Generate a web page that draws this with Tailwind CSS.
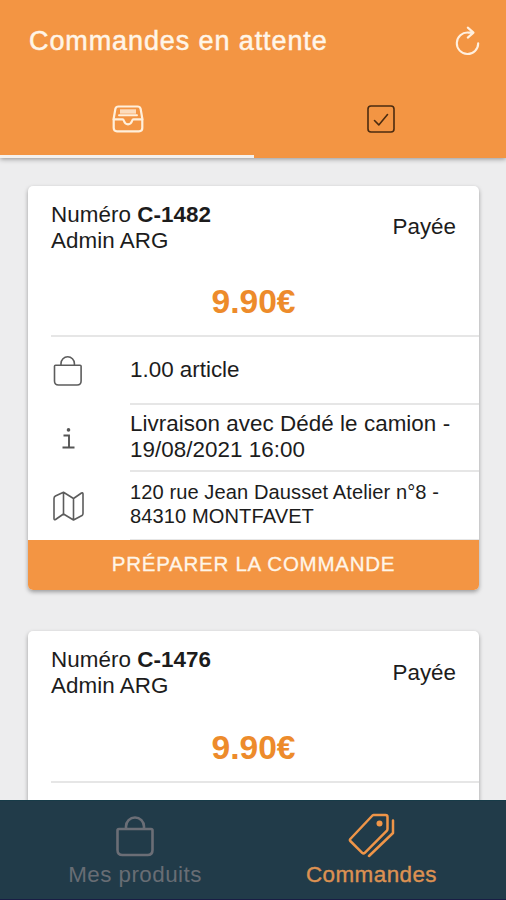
<!DOCTYPE html>
<html lang="fr">
<head>
<meta charset="utf-8">
<title>Commandes en attente</title>
<script src="https://cdn.jsdelivr.net/npm/@tailwindcss/browser@4"></script>
</head>
<body class="h-[900px] overflow-hidden bg-[#ededee] text-[22.4px] leading-[26px] text-[#1c1c1c] font-['Liberation_Sans',Arial,sans-serif]">
<div class="flex h-[900px] flex-col">
  <header class="z-10 flex h-[158px] shrink-0 flex-col bg-[#f39543] shadow-[0_1px_5px_rgba(0,0,0,0.4)]">
    <div class="flex h-[81px] items-center justify-between pl-[29px] pr-[25px]">
      <h1 class="text-[27px] leading-8 tracking-[0.9px] text-[#fff5e8] [-webkit-text-stroke:0.5px_#fff5e8]">Commandes en attente</h1>
      <svg class="h-[32px] w-[28px]" viewBox="0 0 28 32" fill="none" stroke="#fff0e0" stroke-width="2.1" stroke-linecap="round" stroke-linejoin="round"><path d="M20 7.600H15.200A10.700 10.700 0 1 0 25.200 18.200M14.800 2.600l5.700 5-5.700 5"/></svg>
    </div>
    <nav class="grid h-[77px] grid-cols-[254px_1fr]">
      <div class="flex items-center justify-center border-b-3 border-[#f4f1ee] pt-[2px] pl-[2px]">
        <svg class="h-[28px] w-[32px]" viewBox="0 0 32 28" fill="none" stroke="#fff0dc" stroke-width="2.200" stroke-linejoin="round" stroke-linecap="round"><path d="M6.500 1.500h19Q28 1.500 28.600 3.700L30.300 13.500V23Q30.300 26.300 27 26.300H5Q1.700 26.300 1.700 23V13.500L3.400 3.700Q4 1.500 6.500 1.500Z"/><path d="M1.700 14.400H10.500Q11.500 14.400 12 16Q13 19.300 16 19.300Q19 19.300 20 16Q20.500 14.400 21.500 14.400H30.300"/><path d="M7 10.300H25" stroke-width="1.900"/><path d="M8 6.500H24" stroke="#fcdcbc" stroke-width="4.400" stroke-linecap="butt"/></svg>
      </div>
      <div class="flex items-center justify-center pb-px pl-[2px]">
        <svg class="h-[28px] w-[28px]" viewBox="0 0 28 28" fill="none" stroke="#4b2b10" stroke-width="1.600" stroke-linecap="round" stroke-linejoin="round"><rect x="1" y="1" width="26" height="26" rx="3"/><path d="M7.500 15.500l4.300 4.400L20.500 9.500"/></svg>
      </div>
    </nav>
  </header>

  <main class="flex min-h-0 grow flex-col gap-[41px] overflow-hidden px-[28px] pt-[28px]">
    <article class="flex h-[404px] w-[451px] shrink-0 flex-col overflow-hidden rounded-[5px] bg-white shadow-[0_2px_4px_rgba(0,0,0,0.35)]">
      <div class="flex h-[82px] items-center justify-between pl-[23px] pr-[23px]">
        <p class="pt-[2px] tracking-[0.05px]">Numéro <b>C-1482</b><br>Admin ARG</p>
        <p>Payée</p>
      </div>
      <div class="ml-[23px] flex h-[69px] items-center justify-center border-b-2 border-[#e6e6e6] pr-[23px] text-[33.6px] font-bold text-[#ed8b2b]">9.90€</div>
      <div class="grid grid-cols-[102px_1fr]">
        <div class="flex items-center pl-[25px]"><svg class="h-[30px] w-[30px]" viewBox="0 0 30 30" fill="none" stroke="#5c5c5c" stroke-width="1.600"><path d="M2.500 9.300h24.600q1 0 1 1V25q0 4-4 4H5.500q-4 0-4-4V10.300q0-1 1-1ZM8 9.300V7.500a6.700 6.700 0 0 1 13.400 0v1.800"/></svg></div>
        <div class="flex h-[68px] items-center border-b-2 border-[#e6e6e6]">1.00 article</div>
        <div class="flex items-center pl-[34px]"><svg class="h-[21px] w-[13px]" viewBox="0 0 13 21" fill="none" stroke="#555" stroke-width="1.900"><path d="M1.500 7.500H7V19.500M.5 19.500H12.500"/><circle cx="6.500" cy="1.900" r="1.800" fill="#555" stroke="none"/></svg></div>
        <div class="flex h-[67px] items-center border-b-2 border-[#e6e6e6] pb-px tracking-[0.05px]">Livraison avec Dédé le camion -<br>19/08/2021 16:00</div>
        <div class="flex items-center pl-[25px]"><svg class="h-[30px] w-[31px]" viewBox="0 0 31 30" fill="none" stroke="#5c5c5c" stroke-width="1.600" stroke-linejoin="round"><path d="M1 7.500Q1 5.800 2.400 5L10.500 1.300L20.500 7.500L28.500 2Q30 1.200 30 3V22.500Q30 23.800 29 24.500L20.500 29L10.500 23L2.500 28.500Q1 29.200 1 27.500ZM10.500 1.300V23M20.500 7.500V29"/></svg></div>
        <div class="flex h-[68px] items-center border-b border-[#e6e6e6] pb-[3px] text-[20.1px] leading-[24px] tracking-[0.08px]">120 rue Jean Dausset Atelier n°8 -<br>84310 MONTFAVET</div>
      </div>
      <div class="flex grow items-center justify-center bg-[#f39543] pb-[2px] text-[20.5px] tracking-[0.75px] text-[#fff5e8] [-webkit-text-stroke:0.3px_#fff5e8]">PRÉPARER LA COMMANDE</div>
    </article>

    <article class="flex h-[404px] w-[451px] shrink-0 flex-col rounded-[5px] bg-white shadow-[0_2px_4px_rgba(0,0,0,0.35)]">
      <div class="flex h-[83px] items-center justify-between pl-[23px] pr-[23px]">
        <p class="tracking-[0.05px]">Numéro <b>C-1476</b><br>Admin ARG</p>
        <p>Payée</p>
      </div>
      <div class="ml-[23px] flex h-[69px] items-center justify-center border-b-2 border-[#e6e6e6] pr-[23px] text-[33.6px] font-bold text-[#ed8b2b]">9.90€</div>
    </article>
  </main>

  <footer class="z-10 grid h-[100px] shrink-0 grid-cols-[270px_1fr] border-t border-b border-t-[#173b48] border-b-[#191d45] bg-[#213b49] tracking-[0.45px]">
    <div class="flex flex-col items-center pt-[14px] text-[#686d74]">
      <svg class="h-[42px] w-[38px]" viewBox="0 0 38 42" fill="none" stroke="#6b6e76" stroke-width="2.600"><path d="M3 14h32q1.500 0 1.500 1.500V35q0 5-5 5h-25q-5 0-5-5V15.500Q1.500 14 3 14ZM10 14v-2.500a9 9 0 0 1 18 0V14"/></svg>
      <span class="mt-[5px]">Mes produits</span>
    </div>
    <div class="flex flex-col items-center pt-[12px] pr-[33px] text-[#dc9152]">
      <svg class="h-[45px] w-[47px]" viewBox="0 0 47 45" fill="none" stroke="#ef9548" stroke-width="2.500" stroke-linejoin="round" stroke-linecap="round"><path d="M25.500 2H37.500Q39.500 2 39.500 4V16Q39.500 17 38.700 17.800L16.800 39.800Q15.500 41 14.200 39.800L2.300 28Q1.500 27 2.300 26L24 3Q24.700 2 25.500 2ZM21 43L45 20V7.500"/><circle cx="31.500" cy="10.500" r="3" fill="#ef9548" stroke="none"/></svg>
      <span class="mt-[4px] [-webkit-text-stroke:0.4px_#dc9152]">Commandes</span>
    </div>
  </footer>
</div>
</body>
</html>
